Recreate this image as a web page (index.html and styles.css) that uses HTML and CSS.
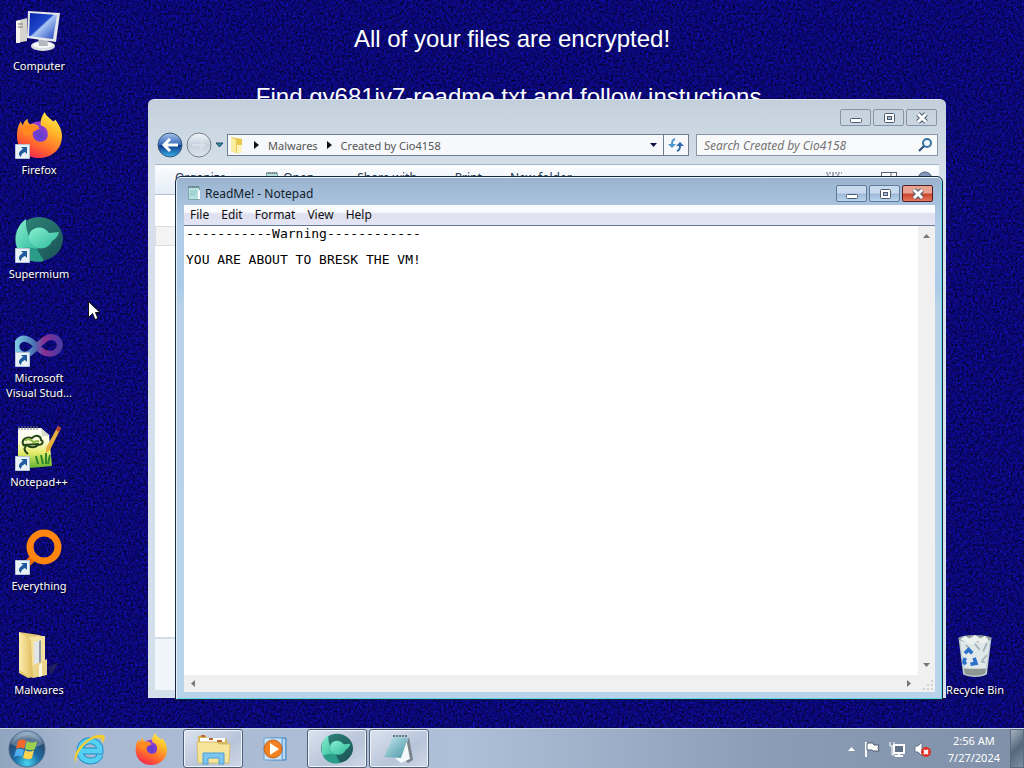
FILE: index.html
```html
<!DOCTYPE html>
<html lang="en">
<head>
<meta charset="utf-8">
<title>Desktop</title>
<link rel="stylesheet" href="styles.css">
</head>
<body>
<svg class="defs" aria-hidden="true">
  <defs>
    <linearGradient id="ff" x1="0.8" y1="0" x2="0.3" y2="1"><stop offset="0" stop-color="#fff14a"/><stop offset=".35" stop-color="#ffb52a"/><stop offset=".7" stop-color="#ff6a2c"/><stop offset="1" stop-color="#f6264e"/></linearGradient>
    <radialGradient id="ffg"><stop offset="0" stop-color="#5b3fd0"/><stop offset="1" stop-color="#a33bd0"/></radialGradient>
    <linearGradient id="sm" x1="0" y1="0" x2="1" y2="1"><stop offset="0" stop-color="#2f8a7c"/><stop offset="1" stop-color="#1a4f55"/></linearGradient>
    <linearGradient id="sm2" x1="0" y1="0" x2="1" y2="1"><stop offset="0" stop-color="#8af0d0"/><stop offset="1" stop-color="#2bb89a"/></linearGradient>
    <linearGradient id="scr" x1="0" y1="0" x2="1" y2="1"><stop offset="0" stop-color="#0a24a8"/><stop offset=".45" stop-color="#1d46cc"/><stop offset=".5" stop-color="#a9c6f4"/><stop offset="1" stop-color="#1c3fc0"/></linearGradient>
    <linearGradient id="vs" x1="0" y1="0" x2="1" y2="0"><stop offset="0" stop-color="#7cc8e4"/><stop offset=".4" stop-color="#4a73b4"/><stop offset=".65" stop-color="#8a2f92"/><stop offset="1" stop-color="#4b3aa4"/></linearGradient>
    <linearGradient id="fold" x1="0" y1="0" x2="1" y2="0"><stop offset="0" stop-color="#fbeeb0"/><stop offset="1" stop-color="#e0bb5c"/></linearGradient>
    <linearGradient id="npp" x1="0" y1="0" x2="0" y2="1"><stop offset="0" stop-color="#fff"/><stop offset=".3" stop-color="#fdfce0"/><stop offset=".6" stop-color="#e6ec6a"/><stop offset="1" stop-color="#58b02c"/></linearGradient>
    <radialGradient id="orb" cx=".5" cy=".9" r=".9"><stop offset="0" stop-color="#48d5f2"/><stop offset=".4" stop-color="#1c6ca4"/><stop offset=".75" stop-color="#274a72"/><stop offset="1" stop-color="#a9c4d8"/></radialGradient>
    <linearGradient id="back" x1="0" y1="0" x2="0" y2="1"><stop offset="0" stop-color="#a6c4ea"/><stop offset=".48" stop-color="#3a6cba"/><stop offset=".52" stop-color="#103a8c"/><stop offset="1" stop-color="#39b2e8"/></linearGradient>
    <linearGradient id="glass" x1="0" y1="0" x2="0" y2="1"><stop offset="0" stop-color="#f3f6fa"/><stop offset=".5" stop-color="#c5d0dc"/><stop offset="1" stop-color="#dfe7ee"/></linearGradient>
    <linearGradient id="np" x1="0" y1="0" x2="1" y2="1"><stop offset="0" stop-color="#c4e8ee"/><stop offset="1" stop-color="#4795a4"/></linearGradient>
    <symbol id="i-arrow" viewBox="0 0 15 15"><path d="M.5.500h14v14H.5z" fill="#e9f1f8" stroke="#b4c4d4"/><path d="M6 3h6v7L10 8C7 9 6 11 6 13 3 11 3 8 8 5z" fill="#1f5b9e"/></symbol>
    <symbol id="i-firefox" viewBox="0 0 48 48"><circle cx="24" cy="25" r="15" fill="url(#ffg)"/><path d="M30 0c1 4 5 6 9 10l2-2c4 5 7 11 7 17 0 13-10 23-24 23S1 38 1 25c0-6 1-11 4-15l2 4c1-3 2-5 5-7 0 3 1 5 3 6 3-1 7 0 9 3l-6 4c-2 6 2 11 8 11 5 0 8-4 7-9 0-4-3-7-7-8-1-5 1-10 4-14z" fill="url(#ff)"/><path d="M6 15c5-3 13-3 19 2l-8 4c-1 4-6 4-9 3z" fill="#ff8a20"/></symbol>
    <symbol id="i-super" viewBox="0 0 48 48"><ellipse cx="24" cy="23" rx="24" ry="22" fill="url(#sm)"/><path d="M11 3C2 9-2 22 3 35c7-3 15-3 21-1C16 27 10 15 11 3z" fill="url(#sm2)"/><path d="M3 34c8-4 15-3 20 1l6 10C18 48 7 43 3 34z" fill="#2b9c87"/><path d="M16 15c5-5 13-5 18 2 4 0 7-1 10-1-1 4-3 7-7 9-3 8-14 10-19 4-5-4-5-10-2-14z" fill="url(#sm2)"/></symbol>
    <symbol id="i-min" viewBox="0 0 14 12"><rect x="1.500" y="6.500" width="11" height="4" rx="1" fill="#fff" stroke="#4c5b70"/></symbol>
    <symbol id="i-max" viewBox="0 0 14 12"><rect x="2.500" y="1.500" width="10" height="9" rx="1" fill="#fff" stroke="#4c5b70"/><rect x="5.500" y="4.500" width="4" height="3" fill="#a8bbd0" stroke="#4c5b70"/></symbol>
    <symbol id="i-close" viewBox="0 0 14 12"><path d="M3 2l8 8M11 2l-8 8" stroke="#4c5b70" stroke-width="5"/><path d="M3 2l8 8M11 2l-8 8" stroke="#fff" stroke-width="3"/></symbol>
    <symbol id="i-doc" viewBox="0 0 14 16"><path d="M1.500 2.500h11v12h-11z" fill="#b7e0df" stroke="#7ba4ad"/><path d="M1 2h12M3 1v2m2-2v2m2-2v2m2-2v2m2-2v2" stroke="#53686e" stroke-dasharray="1 1"/><path d="M3 6h7M3 8h7M3 10h6" stroke="#8cc8cc"/><path d="M11 5h2v9h-2z" fill="#f7fbfb"/></symbol>
  </defs>
</svg>

<main class="desktop">
  <svg class="wallpaper" aria-hidden="true">
    <filter id="grain" x="0" y="0" width="100%" height="100%" color-interpolation-filters="sRGB"><feTurbulence type="fractalNoise" baseFrequency="0.45" numOctaves="2" seed="4"/><feColorMatrix values="0.100 0 0 0 -0.010  0.100 0 0 0 -0.020  0.650 0.550 0 0 -0.150  0 0 0 0 1"/></filter>
    <rect width="100%" height="100%" filter="url(#grain)"/>
  </svg>
  <div class="notice">
    <p>All of your files are encrypted!</p>
    <p>Find gy681iv7-readme.txt and follow instuctions.</p>
  </div>

  <div class="icons">
    <a class="icon" href="#computer"><svg viewBox="0 0 48 48"><path d="M1 13l11-3v23L1 35z" fill="#d6d5cd"/><path d="M1 13l4-1v23l-4 0z" fill="#f3f2ec"/><path d="M3 16h5M3 19h5" stroke="#77766e"/><ellipse cx="28" cy="38" rx="12" ry="5" fill="#dcdfe2"/><ellipse cx="28" cy="37" rx="10" ry="3" fill="#f6f7f8"/><path d="M23 29l9 1 1 8h-9z" fill="#b4b8be"/><path d="M13 3l32 2-4 29-29-4z" fill="#e4e7ea"/><path d="M15 5l27 2-4 24-24-3z" fill="url(#scr)"/></svg><span>Computer</span></a>
    <a class="icon" href="#firefox"><svg viewBox="0 0 48 48"><use href="#i-firefox" width="48" height="46"/><use href="#i-arrow" y="32" width="15" height="15"/></svg><span>Firefox</span></a>
    <a class="icon" href="#supermium"><svg viewBox="0 0 48 48"><use href="#i-super" width="48" height="48"/><use href="#i-arrow" y="32" width="15" height="15"/></svg><span>Supermium</span></a>
    <a class="icon" href="#vs"><svg viewBox="0 0 48 48"><path d="M24 29C17 20 8 15 3 22s3 15 10 12S28 17 36 17s11 8 7 13-12 5-19-1" fill="none" stroke="url(#vs)" stroke-width="6"/><use href="#i-arrow" y="32" width="15" height="15"/></svg><span>Microsoft Visual Stud...</span></a>
    <a class="icon" href="#npp"><svg viewBox="0 0 48 48"><path d="M3 4h23l8 7 3 31-34 3z" fill="url(#npp)"/><path d="M26 4l1 8 8 0z" fill="#d6dcc8"/><path d="M4 2v4m3-4v4m3-4v4m3-4v4m3-4v4m3-4v4m3-4v4" stroke="#777"/><path d="M9 22c-4-6 2-10 8-8 4-4 9-2 9 2 3 1 2 5-3 5-3 3-8 3-11 0-3 2-4 5 1 9m-5-9l16-1" fill="none" stroke="#24451b" stroke-width="2"/><path d="M10 17c2-3 6-2 8 1l6-1" fill="none" stroke="#88b83c" stroke-width="2"/><path d="M26 31l2 9m3-11v11m4-9l-2 9m-12-8l2 8" stroke="#2f852c" stroke-width="2"/><path d="M43 2l3 2-11 22-4 3 0-5z" fill="#e6ae3d"/><path d="M43 2l3 2-2 4-3-2z" fill="#b84634"/><use href="#i-arrow" y="32" width="15" height="15"/></svg><span>Notepad++</span></a>
    <a class="icon" href="#everything"><svg viewBox="0 0 48 48"><path d="M18 30L8 40" stroke="#e96b08" stroke-width="7"/><circle cx="29" cy="19" r="14" fill="none" stroke="#ff8510" stroke-width="7"/><use href="#i-arrow" y="32" width="15" height="15"/></svg><span>Everything</span></a>
    <a class="icon" href="#malwares"><svg viewBox="0 0 48 48"><path d="M33 35l11-5-8 13z" fill="#2b2c54" opacity=".7"/><path d="M4 0l20 3 6 2v38l-17 3-9-5z" fill="#e5c873"/><path d="M14 5l16-1v34l-12 7z" fill="#f4e3a0"/><path d="M19 10l6-2v29l-6 6z" fill="#e3e6e8"/><path d="M24 9l2-1v29l-2 2z" fill="#929ba3"/><path d="M4 0l12 8 2 38-14-8z" fill="url(#fold)"/><path d="M18 33l8-3 6-3v16l-14 3z" fill="#ead58b"/><path d="M24 33l3-2v13l-3 1z" fill="#faf7e5"/></svg><span>Malwares</span></a>
    <a class="icon bin" href="#bin"><svg viewBox="0 0 48 48"><path d="M6 4l36 0-5 40c-6 4-19 4-26 0z" fill="#bcccd2"/><path d="M8 8l32 0-4 29c-7 2-17 2-24 0z" fill="#dfe7e8"/><ellipse cx="24" cy="5" rx="18" ry="4" fill="#8f9fa2"/><path d="M8 6l5-4 5 3 6-4 6 4 5-3 4 5-6 3-6-2-7 3z" fill="#edf1ee"/><path d="M12 38l24 0-1 5c-6 3-17 3-22 0z" fill="#8e9692"/><path d="M24 11l5 6m8-7l-4 9m4 4l-6 7m-17-18l4 4m13 14l4 1" stroke="#a3b3b9" stroke-width="2"/><path d="M13 21l4-4 4 4m2 5l2 6-6 1m-5 0l-2-2 1-5" fill="none" stroke="#2c70cc" stroke-width="4"/></svg><span>Recycle Bin</span></a>
  </div>

  <section class="window explorer" aria-label="Created by Cio4158">
    <header class="titlebar">
      <div class="controls"><button aria-label="Minimize"><svg><use href="#i-min"/></svg></button><button aria-label="Maximize"><svg><use href="#i-max"/></svg></button><button aria-label="Close"><svg><use href="#i-close"/></svg></button></div>
    </header>
    <nav class="navrow">
      <div class="history">
        <button aria-label="Back"><svg width="26" height="26" viewBox="0 0 26 26"><circle cx="13" cy="13" r="12" fill="url(#back)" stroke="#40597d"/><path d="M21 13H7m6-6l-6 6 6 6" fill="none" stroke="#fff" stroke-width="3"/></svg></button>
        <button aria-label="Forward"><svg width="26" height="26" viewBox="0 0 26 26"><circle cx="13" cy="13" r="12" fill="url(#glass)" stroke="#77818e"/><path d="M6 13h12m-4-4l4 4-4 4" fill="none" stroke="#d9e0e7" stroke-width="2"/></svg></button>
        <button aria-label="Recent pages"><svg width="9" height="6" viewBox="0 0 9 6"><path d="M1 1h7L4.500 5z" fill="#2d8aa4" stroke="#244b68"/></svg></button>
      </div>
      <div class="address">
        <svg width="16" height="18" viewBox="0 0 16 18"><path d="M2 1l5 1 6 1v13l-6 1-5-2z" fill="#e8c94d"/><path d="M2 1l5 3v13l-5-2z" fill="#fbeea0"/><path d="M8 9l5 0v7l-5 1z" fill="#fdf4bd"/></svg>
        <svg width="5" height="8" viewBox="0 0 5 8"><path d="M0 0l5 4-5 4z" fill="#111"/></svg>
        <a href="#malwares">Malwares</a>
        <svg width="5" height="8" viewBox="0 0 5 8"><path d="M0 0l5 4-5 4z" fill="#111"/></svg>
        <a href="#created">Created by Cio4158</a>
        <button class="drop" aria-label="Previous locations"><svg width="7" height="4" viewBox="0 0 7 4"><path d="M0 0h7L3.500 4z" fill="#111144"/></svg></button>
        <button class="refresh" aria-label="Refresh"><svg width="16" height="16" viewBox="0 0 16 16"><path d="M7 2C4 3 4 5 4 8" fill="none" stroke="#4b96cc" stroke-width="2"/><path d="M0 7h8l-4 4z" fill="#4b96cc"/><path d="M9 14c3-1 3-3 3-6" fill="none" stroke="#2f6bab" stroke-width="2"/><path d="M8 9h8l-4-4z" fill="#2f6bab"/></svg></button>
      </div>
      <label class="search"><input type="text" aria-label="Search" placeholder="Search Created by Cio4158"><svg width="14" height="14" viewBox="0 0 14 14"><circle cx="9" cy="5" r="4" fill="#eef6fc" stroke="#37729f" stroke-width="2"/><path d="M6 8l-5 5" stroke="#294d74" stroke-width="2"/></svg></label>
    </nav>
    <div class="pane">
      <div class="commands"><span>Organize</span><span class="open"><svg width="14" height="16"><use href="#i-doc"/></svg>Open</span><span class="share">Share with</span><span class="print">Print</span><span class="new">New folder</span><svg class="views" width="106" height="16" viewBox="0 0 106 16"><path d="M0 2h16M1 4h3m2 0h3m2 0h3" stroke="#5a6472" stroke-dasharray="2 1"/><rect x="55.500" y="1.500" width="15" height="12" fill="#fff" stroke="#566473"/><path d="M65 1v13" stroke="#566473"/><circle cx="99" cy="8" r="7" fill="#8398bd" stroke="#50627e"/></svg></div>
      <div class="files"><div class="row"></div></div>
      <div class="details"></div>
    </div>
  </section>

  <section class="window notepad" aria-label="ReadMe! - Notepad">
    <header class="titlebar">
      <svg width="14" height="16"><use href="#i-doc"/></svg>
      <h1>ReadMe! - Notepad</h1>
      <div class="controls"><button aria-label="Minimize"><svg><use href="#i-min"/></svg></button><button aria-label="Maximize"><svg><use href="#i-max"/></svg></button><button class="close" aria-label="Close"><svg><use href="#i-close"/></svg></button></div>
    </header>
    <nav class="menu"><button>File</button><button>Edit</button><button>Format</button><button>View</button><button>Help</button></nav>
    <div class="editor">
      <textarea aria-label="Document" spellcheck="false" wrap="off">-----------Warning------------

YOU ARE ABOUT TO BRESK THE VM!</textarea>
      <div class="vbar"><svg width="7" height="4" viewBox="0 0 7 4"><path d="M0 4h7L3.500 0z"/></svg><svg width="7" height="4" viewBox="0 0 7 4"><path d="M0 0h7L3.500 4z"/></svg></div>
      <div class="hbar"><svg width="4" height="7" viewBox="0 0 4 7"><path d="M4 0v7L0 3.500z"/></svg><svg width="4" height="7" viewBox="0 0 4 7"><path d="M0 0v7l4-3.500z"/></svg></div>
      <div class="grip"><svg width="11" height="11" viewBox="0 0 11 11"><path d="M9 1h2v2H9zM9 5h2v2H9zM5 5h2v2H5zM9 9h2v2H9zM5 9h2v2H5zM1 9h2v2H1z" fill="#d2d2d2"/></svg></div>
    </div>
  </section>

  <svg class="cursor" width="12" height="19" viewBox="0 0 12 19" aria-hidden="true"><path d="M.5.500v16l4-4 2.500 6 3-1-2.500-6H12z" fill="#fff" stroke="#111"/></svg>
</main>

<footer class="taskbar">
  <button class="start" aria-label="Start"><svg width="40" height="38" viewBox="0 0 40 38"><circle cx="20" cy="19" r="18" fill="url(#orb)" stroke="#4f6987"/><path d="M4 14c6-14 26-14 32 0-9 5-23 5-32 0z" fill="#fff" opacity=".25"/><path d="M11 11c3-2 6-2 8 0l-2 8c-3-2-5-1-8 0z" fill="#f4682b"/><path d="M20 11c3 2 6 2 10 0l-2 8c-4 2-7 1-10 0z" fill="#9cd14b"/><path d="M9 20c3-2 5-1 8 0l-2 7c-3-2-5-1-8 0z" fill="#50b0ef"/><path d="M18 20c3 2 6 2 9 0l-2 8c-3 2-6 1-9 0z" fill="#ffd34c"/></svg></button>
  <button class="task" aria-label="Internet Explorer"><svg width="32" height="32" viewBox="0 0 32 32"><path d="M27 22c-3 9-20 8-20-4 0-14 21-13 20 0H8" fill="none" stroke="#218fc6" stroke-width="7"/><path d="M27 22c-3 9-20 8-20-4 0-14 21-13 20 0H8" fill="none" stroke="#55d0f3" stroke-width="5"/><path d="M3 30C-4 20 17-1 30 2c3 1 2 5-1 9 1-4 0-6-4-6C15 5 2 20 3 30z" fill="#f5cc32"/></svg></button>
  <button class="task" aria-label="Firefox"><svg width="32" height="32"><use href="#i-firefox"/></svg></button>
  <button class="task running" aria-label="Windows Explorer"><svg width="36" height="32" viewBox="0 0 36 32"><path d="M3 3h8l2 3h19l1 23H3z" fill="#d7b658"/><path d="M5 5h25v4H5z" fill="#fff"/><path d="M6 3h4m4 3h4m4 2h5" stroke="#bb6633" stroke-width="2"/><path d="M2 9h20l2 2h11l-1 19H3z" fill="#f6e59b" stroke="#d7bd68"/><path d="M8 31V20h21v11h-5v-6H13v6z" fill="#7cc5ef" stroke="#4c9fd5"/></svg></button>
  <button class="task" aria-label="Media Player"><svg width="30" height="30" viewBox="0 0 30 30"><path d="M10 4h16v22H10z" fill="#78b4e4" stroke="#4a84bc"/><path d="M4 4h18v22H4z" fill="#c9e3f7" stroke="#6ba4d6"/><path d="M24 5v20" stroke="#fff"/><circle cx="13" cy="15" r="9" fill="#f28221" stroke="#c4611a"/><path d="M10 9l9 6-9 6z" fill="#fff"/></svg></button>
  <button class="task running" aria-label="Supermium"><svg width="32" height="32"><use href="#i-super"/></svg></button>
  <button class="task running" aria-label="Notepad"><svg width="34" height="32" viewBox="0 0 34 32"><path d="M27 4l4 23-5 3-6-6z" fill="#7a828a"/><path d="M24 5l4 21-9 4-6-5z" fill="#f4f8f9"/><path d="M11 4l15 1-7 20-17-1z" fill="url(#np)"/><path d="M11 3h15" stroke="#5d7880" stroke-width="2" stroke-dasharray="2 1"/></svg></button>
  <div class="tray">
    <svg width="7" height="4" viewBox="0 0 7 4"><path d="M0 4h7L3.500 0z" fill="#fff"/></svg>
    <svg width="16" height="16" viewBox="0 0 16 16"><path d="M2 1v15" stroke="#fff" stroke-width="2"/><path d="M3 2h6l1 2h5l-1 3 1 3H9L8 9H3z" fill="#fff" stroke="#4c5c72"/></svg>
    <svg width="16" height="16" viewBox="0 0 16 16"><path d="M5 4h10v8H5zM10 12v3M6 15h8" fill="#5f7186" stroke="#fff" stroke-width="2"/><path d="M1 1v4h4V1M3 5v9h3" fill="none" stroke="#fff"/></svg>
    <svg width="17" height="16" viewBox="0 0 17 16"><path d="M1 5h3l4-4v14l-4-4H1z" fill="#fff" stroke="#6a7788"/><circle cx="12" cy="11" r="5" fill="#dc3027"/><path d="M10 9l4 4m0-4l-4 4" stroke="#fff" stroke-width="2"/></svg>
    <time class="clock" datetime="2024-07-27T02:56"><span>2:56 AM</span><span>7/27/2024</span></time>
  </div>
  <button class="peek" aria-label="Show desktop"></button>
</footer>
</body>
</html>
```
FILE: styles.css
```css
* { box-sizing: border-box; }

body {
  margin: 0;
  height: 100vh;
  display: flex;
  flex-direction: column;
  overflow: hidden;
  background: #0b0a6c;
  font: 12px/15px "Noto Sans", sans-serif;
}

button { margin: 0; padding: 0; border: 0; background: none; font: inherit; color: inherit; }
a { color: inherit; text-decoration: none; }
svg { display: block; flex: none; }
.defs { position: absolute; width: 0; height: 0; }

.desktop { position: relative; flex: 1; min-height: 0; }
.wallpaper { position: absolute; inset: 0; width: 100%; height: 100%; }

.notice {
  position: absolute;
  inset: 25px 0 auto;
  text-align: center;
  color: #fff;
  font: 24px/28px "Liberation Sans", Arial, sans-serif;
}
.notice p { margin: 0 0 30px; }

.icons {
  position: relative;
  display: grid;
  grid-template-columns: 78px 1fr 98px;
  grid-auto-rows: 104px;
  padding-top: 8px;
  font-size: 11px;
}
.icon {
  grid-column: 1;
  display: flex;
  flex-direction: column;
  align-items: center;
  gap: 2px;
  color: #fff;
  text-align: center;
  text-shadow: 1px 1px 2px #000;
}
.icon svg { width: 48px; height: 48px; }
.bin { grid-column: 3; grid-row: 7; }
.bin svg { width: 44px; }

.window {
  position: absolute;
  display: flex;
  flex-direction: column;
  border-radius: 6px 6px 0 0;
}
.titlebar { display: flex; align-items: flex-start; padding-right: 2px; }
.controls { display: flex; gap: 2px; margin-left: auto; }
.controls button {
  display: grid;
  place-items: center;
  width: 31px;
  height: 17px;
  border: 1px solid #8593a7;
  border-radius: 2px;
}
.controls svg { width: 14px; height: 12px; }

.explorer {
  inset: 99px 78px 30px 148px;
  padding: 0 7px 7px;
  border: 1px solid #dbe5ee;
  border-width: 1px 0;
  background: linear-gradient(#c3d0db, #d5e0ea 70px, #d3dfeb);
}
.explorer .titlebar { height: 31px; padding-top: 9px; }
.navrow { display: flex; align-items: center; height: 28px; gap: 7px; margin-bottom: 5px; padding: 0 1px 0 2px; color: #555; font-size: 11px; }
.history { display: flex; align-items: center; gap: 3px; margin-right: -4px; }
.address { flex: 1; display: flex; align-items: center; gap: 9px; height: 22px; padding-left: 1px; border: 1px solid #6d7c8e; background: #f6f8fb; }
.address .drop { margin-left: auto; padding: 6px 0; }
.refresh { display: grid; place-items: center; align-self: stretch; width: 25px; margin-left: -3px; border-left: 1px solid #6d7c8e; }
.search { display: flex; align-items: center; width: 242px; height: 22px; padding: 0 5px 0 7px; border: 1px solid #8997a7; background: #f8f9fb; }
.search input { flex: 1; min-width: 0; padding: 0; border: 0; outline: 0; background: none; font: italic 12px/15px "Noto Sans", sans-serif; }
.search input::placeholder { color: #747474; opacity: 1; }

.pane { flex: 1; display: flex; flex-direction: column; min-height: 0; background: #fff; }
.commands { display: flex; height: 31px; padding: 6px 7px 0 20px; border-top: 1px solid #a5b4c5; border-bottom: 1px solid #b3c0cf; background: linear-gradient(#fcfdff, #e4edf6); color: #26384f; font-size: 12px; line-height: 14px; }
.commands span { display: flex; gap: 4px; }
.commands .open { margin-left: 39px; }
.commands .share { margin-left: 43px; }
.commands .print { margin-left: 38px; }
.commands .new { margin-left: 28px; }
.commands .views { margin-left: auto; }
.files { flex: 1; padding-top: 31px; }
.row { height: 20px; border: 1px solid #dedede; background: #f3f3f3; }
.details { height: 53px; border-top: 2px solid #d5dce5; background: #f0f5fa; }

.notepad {
  inset: 176px 81px 28px 175px;
  padding: 0 7px 7px 8px;
  border: 1px solid #18283f;
  box-shadow: inset 0 1px #e8f4ff, inset 1px 0 #e3f0fa, inset -1px -1px #63d4ee;
  background: linear-gradient(#9bb3ce, #b3cde8 48px, #accbe8 110px, #bad2e8 130px, #b9d4ea);
}
.notepad .titlebar { height: 28px; padding: 8px 2px 0 3px; gap: 4px; }
.notepad .titlebar h1 { margin: 0; font: 12px/17px "Noto Sans", sans-serif; color: #111c2b; }
.notepad .controls button { border-color: #61799a; background: linear-gradient(#c8daed 48%, #9cb7d3 52%, #b8d5ee); }
.notepad .controls .close { border-color: #521c20; background: linear-gradient(#e9a392 48%, #c9422b 52%, #e5795c); }
.menu { display: flex; height: 20px; padding: 0 6px; gap: 12px; background: linear-gradient(#fafbff 35%, #dfe0f0 45%, #e3e5f4); color: #111; }
.menu button { padding-bottom: 1px; }
.editor { flex: 1; min-height: 0; display: grid; grid-template: 1fr 17px / 1fr 17px; border-top: 1px solid #647b9c; background: #fff; }
.editor textarea { resize: none; min-width: 0; min-height: 0; padding: 1px 2px; border: 0; outline: 0; overflow: hidden; background: #fff; color: #000; font: 13px/13px "DejaVu Sans Mono", monospace; }
.vbar, .hbar { display: flex; justify-content: space-between; align-items: center; background: #f0f0f0; fill: #777; }
.vbar { flex-direction: column; padding: 8px 0; }
.hbar { padding: 0 7px; }
.grip { display: grid; place-items: end; padding: 2px; background: #f0f0f0; }

.cursor { position: absolute; left: 88px; top: 301px; }

.taskbar {
  display: flex;
  height: 40px;
  gap: 2px;
  border-top: 1px solid #cdd8e6;
  background: linear-gradient(90deg, #8fa4bf, #a9b9d2 8%, #aebfd8 45%, #8b9db6 75%, #7f90a8);
}
.start { display: grid; place-items: center; width: 54px; margin-right: 3px; }
.task { display: grid; place-items: center; width: 60px; border: 1px solid transparent; border-radius: 3px; }
.running { border-color: #4f6078; box-shadow: inset 0 0 0 1px #eef3fa; background: linear-gradient(145deg, #dce3ef, #b7c4d9 60%, #ced8e7); }
.tray { display: flex; align-items: center; gap: 9px; margin-left: auto; padding-right: 8px; color: #fff; font-size: 11px; }
.clock { display: flex; flex-direction: column; margin-left: 8px; gap: 2px; text-align: center; }
.peek { width: 14px; border: 1px solid #5a6b80; background: linear-gradient(135deg, #a6b3c2, #56687c 50%, #7d8fa3); }
```
